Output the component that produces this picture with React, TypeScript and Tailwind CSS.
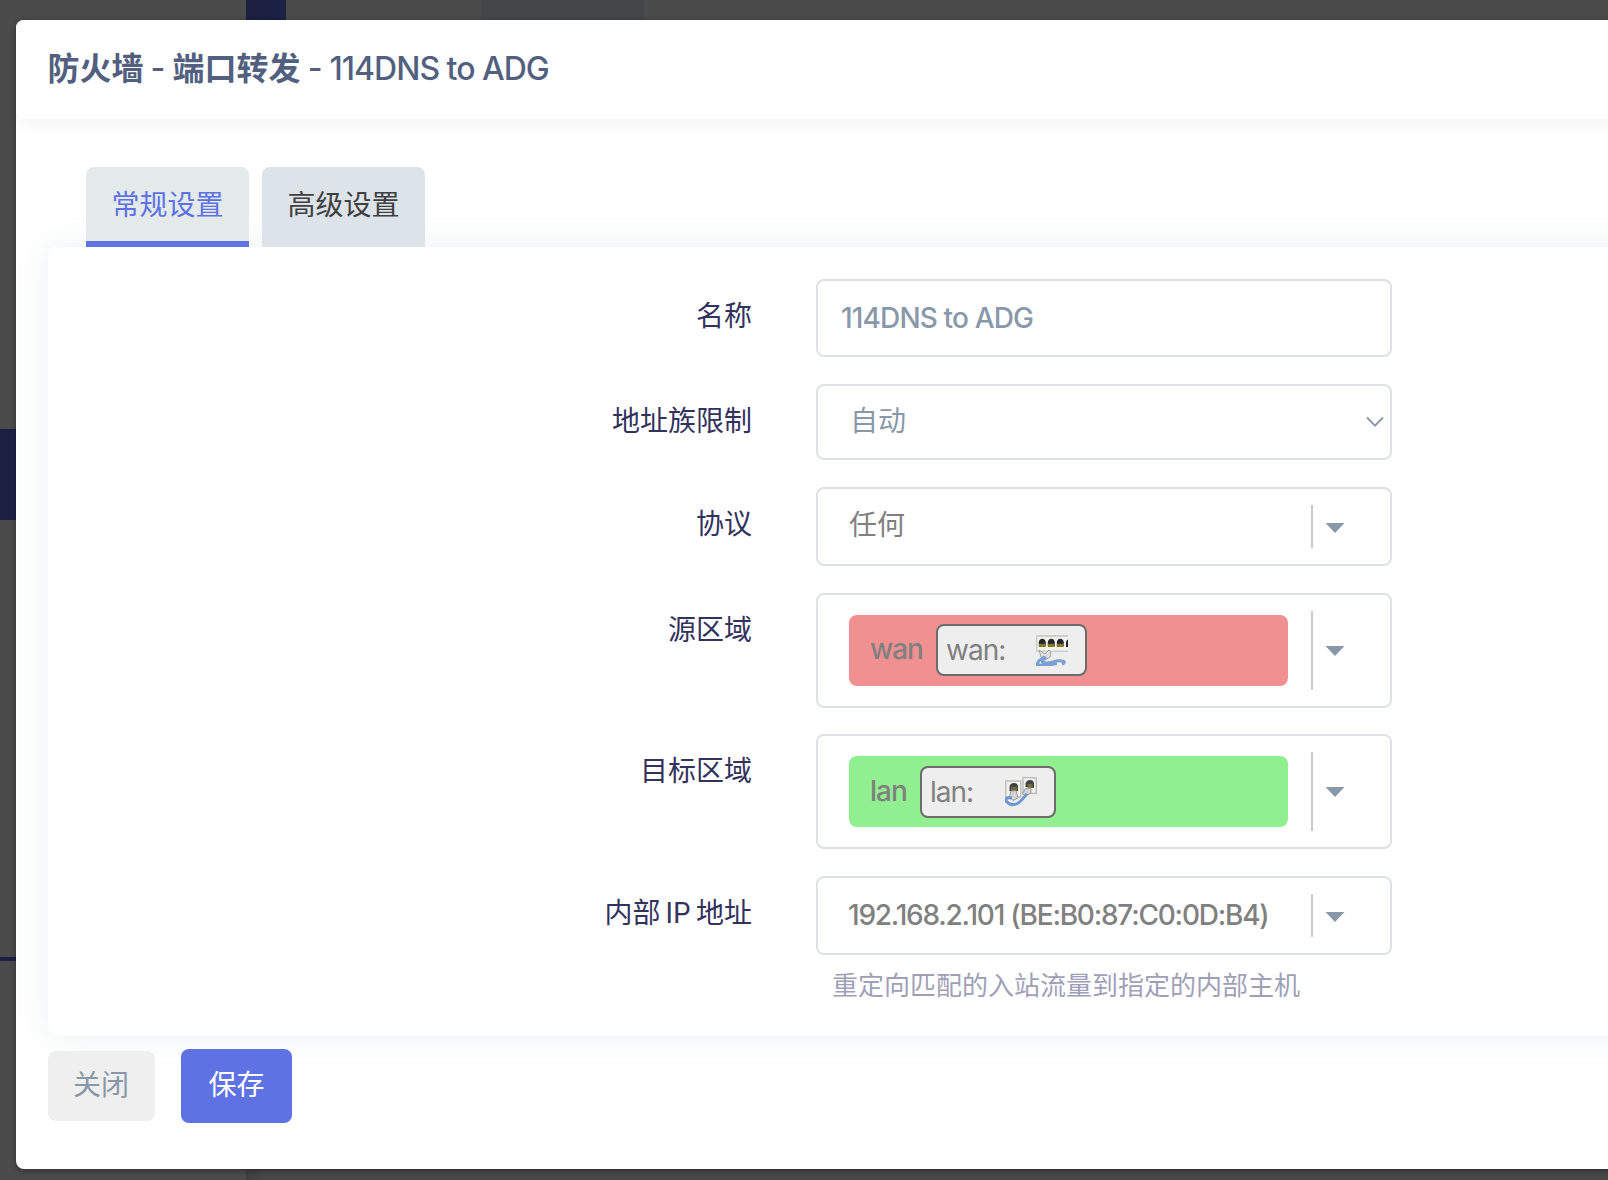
import React from "react";

const Caret = () => (
  <svg width="20" height="10" viewBox="0 0 20 10" className="block shrink-0">
    <path d="M0.5 0H19.5L10 10Z" fill="#8898aa" />
  </svg>
);

const WanIcon = () => (
  <svg width="32" height="32" viewBox="0 0 32 32" className="block shrink-0 blur-[0.5px]">
    <rect x="0" y="1" width="32" height="17" fill="#cfcfca" />
    <rect x="1.5" y="3" width="30.5" height="13.5" fill="#f3f3ee" />
    {[2.8, 11.8, 20.8].map((x) => (
      <g key={x}>
        <path d={`M${x} 12V8.5Q${x + 0.5} 4.8 ${x + 3.5} 4.8Q${x + 6.5} 4.8 ${x + 7} 8.5V12Z`} fill="#24282e" />
        <rect x={x + 0.2} y="9.8" width="6.6" height="3.2" fill="#857828" />
      </g>
    ))}
    <path d="M30 13V8Q30.3 6 32 5.5V13Z" fill="#24282e" />
    <path d="M3 16L9 20L13 16L15 18L14 23L9 26L5 23Z" fill="#dedede" stroke="#a5a5a5" strokeWidth="1" />
    <path d="M1 33Q1 27 6 24.5Q8 23 9 24Q5 27 7 28.5Q11 29.5 17 28Q23 26 28 27.5Q29 29 26 30" fill="none" stroke="#7b9fd2" strokeWidth="3" />
    <path d="M2 30.5Q12 32 21 29.5" fill="none" stroke="#7b9fd2" strokeWidth="2.6" />
  </svg>
);

const LanIcon = () => (
  <svg width="32" height="32" viewBox="0 0 32 32" className="block shrink-0 blur-[0.5px]">
    <rect x="0.8" y="5" width="15" height="16" fill="#f2f2ef" stroke="#bcbcb8" strokeWidth="1.4" />
    <path d="M18 1.4L31.3 2V17.5L18 17Z" fill="#f2f2ef" stroke="#bcbcb8" strokeWidth="1.4" />
    <path d="M4.5 15V10.5Q5 7 9 7Q13 7 13 11V15Z" fill="#3f4348" />
    <path d="M20.5 11V7.5Q21.5 4 25 4Q29 4 29 8V12Z" fill="#3f4348" />
    <rect x="6" y="11" width="6" height="3.6" fill="#746a38" />
    <rect x="22.5" y="8" width="5" height="3.6" fill="#746a38" />
    <path d="M6 15L11 14.5L13 22L8 24.5L4.5 21Z" fill="#d4d4d4" stroke="#8f8f8f" strokeWidth="0.9" />
    <path d="M20 13L26 12L26 17L21 20L17.5 18Z" fill="#d4d4d4" stroke="#8f8f8f" strokeWidth="0.9" />
    <path d="M7 22Q-0.5 20.5 1.5 25.5Q6 30.5 12.5 27.5Q17 24.5 22 17.5" fill="none" stroke="#6d97d1" strokeWidth="3" />
  </svg>
);

function Row({ label, children }: { label: React.ReactNode; children: React.ReactNode }) {
  return (
    <div className="flex items-start">
      <div className="w-[704px] shrink-0 pt-[17px] text-right text-[28px] leading-[38px] text-[#32325d]">{label}</div>
      <div className="ml-16 shrink-0">{children}</div>
    </div>
  );
}

function Dropdown({ tall, children }: { tall?: boolean; children: React.ReactNode }) {
  return (
    <div className={`flex w-[576px] items-center rounded-lg border-2 border-[#dee2e6] bg-white pl-[31px] ${tall ? "h-[115px]" : "h-[79px]"}`}>
      <div className="w-[462px] shrink-0">{children}</div>
      <div className={`flex items-center border-l-2 border-[#ccc] pl-3 ${tall ? "h-[79px] pt-px" : "h-[43px] pt-0.5"}`}>
        <Caret />
      </div>
    </div>
  );
}

function Zone({ name, color, box, nameClass, icon }: { name: string; color: string; box: string; nameClass: string; icon: React.ReactNode }) {
  return (
    <div className={`flex h-[71px] w-[439px] items-center rounded-lg pl-[21px] font-['Inter',sans-serif] text-[28px] leading-[38px] tracking-[-1px] text-[#808080] ${color}`}>
      <span className={`shrink-0 pb-px font-medium ${nameClass}`}>{name}</span>
      <span className={`flex h-[52px] shrink-0 items-center justify-between rounded-lg border-2 border-[#6c6c6c] bg-[#eee] pl-2 pr-[17px] ${box}`}>
        <span>{name}:</span>
        {icon}
      </span>
    </div>
  );
}

export default function App() {
  return (
    <div className="relative h-[1180px] w-[1608px] overflow-hidden bg-[#4b4b4b] font-['Lato','Noto_Sans_CJK_SC',sans-serif]">
      <div className="absolute left-[246px] top-0 h-5 w-10 bg-[linear-gradient(to_right,#1a1f3f,#1c2246)]" />
      <div className="absolute left-[481px] top-0 h-5 w-[163px] bg-[#444648]" />
      <div className="absolute left-0 top-[429px] h-[91px] w-4 bg-[#1c2144]" />
      <div className="absolute left-0 top-[957px] h-1 w-4 bg-[#1c2144]" />
      <div className="absolute left-[246px] top-[1160px] h-5 w-[1362px] bg-[linear-gradient(to_right,#404040,#484848_20px)]" />

      <div className="absolute left-4 top-5 flex h-[1149px] w-[1640px] flex-col rounded-lg bg-white shadow-[0_2px_6px_rgba(0,0,0,0.35)]">
        <div className="flex h-[99px] shrink-0 rounded-lg bg-white pl-[31.5px] pt-[26px] text-[32px] font-bold leading-[44px] text-[#525f7f] shadow-[0_6px_16px_rgba(0,0,0,0.045)]">
          <span>防火墙</span>
          <span className="w-[29px] text-center font-['Inter',sans-serif] font-medium">-</span>
          <span>端口转发</span>
          <span className="w-[29px] text-center font-['Inter',sans-serif] font-medium">-</span>
          <span className="pt-px font-['Inter',sans-serif] font-medium tracking-[-1px]">114DNS to ADG</span>
        </div>

        <div className="flex shrink-0 gap-[13px] pl-[70px] pt-12">
          <div className="relative z-10 flex h-20 w-[163px] justify-center rounded-t-lg border-b-[6px] border-[#5e72e4] bg-[#e4e9ec] pt-[18px] text-[28px] leading-[38px] text-[#5e72e4]">常规设置</div>
          <div className="relative z-10 flex h-20 w-[163px] justify-center rounded-t-lg bg-[#dce3e9] pt-[18px] text-[28px] leading-[38px] text-[#404040]">高级设置</div>
        </div>

        <div className="ml-8 flex h-[788px] shrink-0 flex-col rounded-lg bg-white pt-8 shadow-[0_0_32px_rgba(136,152,170,0.15)]">
          <div className="flex flex-col gap-[27px]">
            <Row label="名称">
              <div className="flex h-[78px] w-[576px] items-center rounded-lg border-2 border-[#dee2e6] bg-white pb-px pl-[23px] font-['Inter',sans-serif] text-[28px] font-medium tracking-[-0.85px] text-[#8898aa]">114DNS to ADG</div>
            </Row>
            <Row label="地址族限制">
              <div className="flex h-[76px] w-[576px] items-center justify-between rounded-lg border-2 border-[#dee2e6] bg-white pb-1 pl-8 pr-1.5 text-[28px] text-[#8898aa]">
                自动
                <svg width="18" height="12" viewBox="0 0 18 12" className="mt-1 block">
                  <path d="M1 1.5L9 9.7L17 1.5" fill="none" stroke="#8898aa" strokeWidth="1.8" />
                </svg>
              </div>
            </Row>
            <Row label="协议">
              <Dropdown>
                <div className="pb-1.5 text-[28px] leading-[38px] text-[#808080]">任何</div>
              </Dropdown>
            </Row>
            <Row label="源区域">
              <Dropdown tall>
                <Zone name="wan" color="bg-[#f09090] pb-0.5" box="w-[151px]" nameClass="w-[66px]" icon={<WanIcon />} />
              </Dropdown>
            </Row>
            <div className="-mt-px">
              <Row label="目标区域">
                <Dropdown tall>
                  <Zone name="lan" color="bg-[#90f090]" box="w-[136px]" nameClass="w-[50px]" icon={<LanIcon />} />
                </Dropdown>
              </Row>
            </div>
            <Row label={<>内部<span className="px-[5px] font-['Inter',sans-serif]">IP</span>地址</>}>
              <Dropdown>
                <div className="-ml-px whitespace-nowrap pb-px font-['Inter',sans-serif] text-[28px] font-medium leading-[38px] tracking-[-1.22px] text-[#808080]">192.168.2.101 (BE:B0:87:C0:0D:B4)</div>
              </Dropdown>
              <div className="pl-4 pt-3 text-[26px] leading-[36px] text-[#a09fb8]">重定向匹配的入站流量到指定的内部主机</div>
            </Row>
          </div>
        </div>

        <div className="relative flex items-center gap-[26px] pl-8 pt-3.5">
          <button className="h-[70px] w-[107px] rounded-lg bg-[#efefef] pb-1 pr-px text-[28px] leading-[38px] text-[#8898aa]">关闭</button>
          <button className="h-[74px] w-[111px] rounded-lg bg-[#5e72e4] pb-1 text-[28px] leading-[38px] text-white">保存</button>
        </div>
      </div>
    </div>
  );
}
